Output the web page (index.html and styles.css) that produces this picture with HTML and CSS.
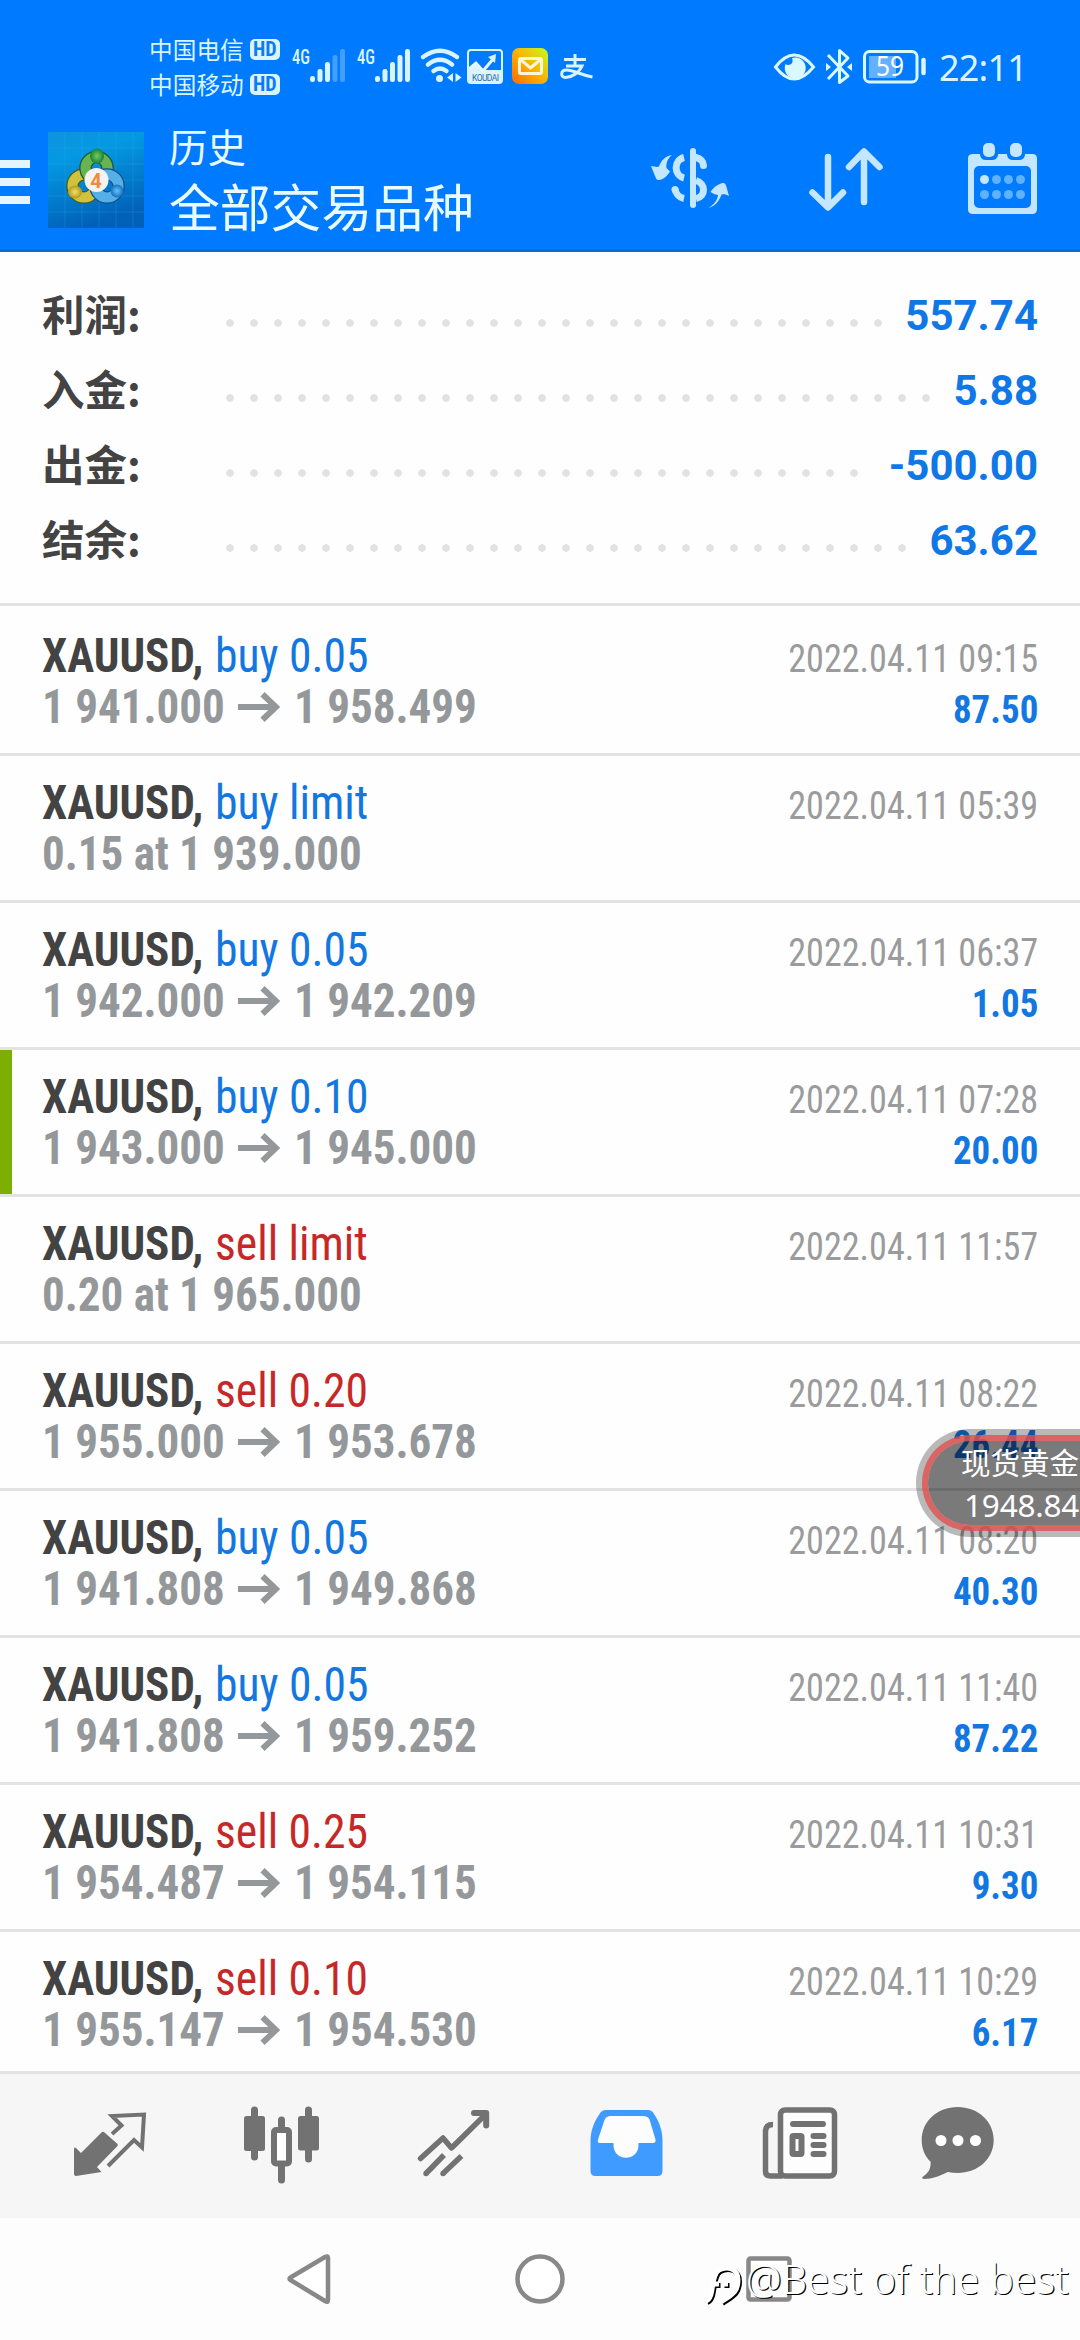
FILE: index.html
```html
<!DOCTYPE html>
<html lang="zh-CN">
<head>
<meta charset="utf-8">
<title>历史</title>
<link rel="stylesheet" href="styles.css">
</head>
<body>
<svg class="defs" width="0" height="0">
  <symbol id="arrow" viewBox="0 0 42 30"><path d="M0 15H38M24.500 2.200 38 15 24.500 27.800" fill="none" stroke="#95989a" stroke-width="6"/></symbol>
</svg>

<header class="top">
  <div class="status">
    <div class="carriers">
      <div class="carrier">中国电信<span class="hd">HD</span></div>
      <div class="carrier">中国移动<span class="hd">HD</span></div>
    </div>
    <svg class="status-left" viewBox="286 36 314 60" width="314" height="60" fill="#d9f4ff">
      <g class="gen"><text x="292" y="64" textLength="18" lengthAdjust="spacingAndGlyphs">4G</text><text x="357" y="64" textLength="18" lengthAdjust="spacingAndGlyphs">4G</text></g>
      <rect x="310" y="76" width="5" height="6" rx="2.300"/><rect x="317.500" y="69" width="5" height="13" rx="2.300"/><rect x="325" y="62" width="5" height="20" rx="2.300"/>
      <g opacity=".3"><rect x="332.500" y="55" width="5" height="27" rx="2.300"/><rect x="340" y="49" width="5" height="33" rx="2.300"/></g>
      <rect x="375" y="76" width="5" height="6" rx="2.300"/><rect x="382.500" y="69" width="5" height="13" rx="2.300"/><rect x="390" y="62" width="5" height="20" rx="2.300"/><rect x="397.500" y="55" width="5" height="27" rx="2.300"/><rect x="405" y="49" width="5" height="33" rx="2.300"/>
      <g fill="none" stroke="#d9f4ff" stroke-width="4.500" stroke-linecap="round"><path d="M423 57Q440 44.500 457 57M428 64.500Q440 55 452 64.500M433.500 71Q440 66 446.500 71"/></g>
      <circle cx="439.500" cy="78.500" r="3.500"/><path d="M453 73v9l-6-4.500zM455.500 73v9l6-4.500z"/>
      <rect x="468" y="50" width="34" height="33" rx="3" fill="none" stroke="#d9f4ff" stroke-width="2"/>
      <path d="M468 71l8-8 6 7h20v13h-34z"/>
      <path d="M469 69l7-6 7 8 11-13" fill="none" stroke="#e6f8ff" stroke-width="3"/><path d="M496 54l-1 9-7-6z"/>
      <text class="koudai" x="472" y="80.500" textLength="27">KOUDAI</text>
      <defs><linearGradient id="mail" x1="0" y1="1" x2="1" y2="0"><stop stop-color="#ff6a00"/><stop offset=".45" stop-color="#ffaa00"/><stop offset="1" stop-color="#c3ff20"/></linearGradient></defs>
      <rect x="512" y="48" width="36" height="36" rx="7" fill="url(#mail)"/><rect x="519.500" y="58.500" width="22" height="15" rx="1.500" fill="none" stroke="#fff6d8" stroke-width="3"/><path d="M521 60l9.500 8 9.500-8" fill="none" stroke="#fff6d8" stroke-width="3"/>
      <path d="M564 59.500h22M575 54v12M566 66h16c-3 7-11 11.500-16.500 11.500-5.500 0-5-7.500 1-7.500 7 0 13 4.500 26 7" fill="none" stroke="#d9f4ff" stroke-width="3"/>
    </svg>
    <svg class="status-right" viewBox="770 44 156 44" width="156" height="44" fill="none" stroke="#d9f8ff" stroke-width="3">
      <path d="M775.500 67Q794 43 813.500 67Q794 91 775.500 67Z"/><path d="M792 58a10.500 10.500 0 1 1-6.500 6c3 2.500 9 0 6.500-6z" fill="#d9f8ff" stroke="none"/>
      <path d="M828 55l20 21-8.500 6.500v-32L848 58l-20 21" stroke-linejoin="round"/><path d="M826 63v8l5-4zM852 63v8l-5-4z" fill="#d9f8ff" stroke="none"/>
      <rect x="864.500" y="51.500" width="52.500" height="30.500" rx="5"/><rect x="869" y="56" width="27" height="22" fill="#63b0ff" stroke="none"/><path d="M923.500 60v13" stroke-width="4.500" stroke-linecap="round"/>
      <text class="batt" x="876" y="76" textLength="28" lengthAdjust="spacingAndGlyphs" fill="#fff" stroke="none">59</text>
    </svg>
    <div class="clock">22:11</div>
  </div>
  <div class="bar">
    <svg class="bar-left" viewBox="0 126 150 108" width="150" height="108">
      <defs>
        <linearGradient id="app" x1="0" y1="0" x2=".3" y2="1"><stop stop-color="#0f92e0"/><stop offset=".3" stop-color="#0499e2"/><stop offset="1" stop-color="#0161b8"/></linearGradient>
        <radialGradient id="gr"><stop stop-color="#6fce5c"/><stop offset="1" stop-color="#1b8136"/></radialGradient>
        <radialGradient id="ye"><stop stop-color="#efe16d"/><stop offset="1" stop-color="#b39a18"/></radialGradient>
        <radialGradient id="bl"><stop stop-color="#65c3f5"/><stop offset="1" stop-color="#1670c0"/></radialGradient>
      </defs>
      <path d="M0 160h30v8H0zM0 178h30v8H0zM0 196h30v8H0z" fill="#e4f5ff"/>
      <rect x="48" y="132" width="96" height="96" fill="url(#app)"/>
      <path d="M48 148h96M48 164h96M48 180h96M48 196h96M48 212h96M65 132v96M82 132v96M99 132v96M116 132v96M133 132v96" stroke="#38b5f0" stroke-opacity=".25"/>
      <g fill="none" stroke-width="10">
        <circle cx="84" cy="186" r="11.500" stroke="#4c5a1e" stroke-width="12.500"/><circle cx="84" cy="186" r="11.500" stroke="#cfc23c"/>
        <circle cx="96.500" cy="168" r="11" stroke="#175c35" stroke-width="12.500"/><circle cx="96.500" cy="168" r="11" stroke="#68b352"/>
        <circle cx="107" cy="186" r="11.500" stroke="#124e87" stroke-width="12.500"/><circle cx="107" cy="186" r="11.500" stroke="#55b0e8"/>
      </g>
      <ellipse cx="97" cy="156" rx="7" ry="7.500" fill="url(#gr)"/><ellipse cx="75" cy="192" rx="7" ry="6.500" fill="url(#ye)"/><ellipse cx="117" cy="191" rx="6.500" ry="6.500" fill="url(#bl)"/>
      <circle cx="96.500" cy="180" r="12" fill="#f5f3f0"/><text class="four" x="96" y="187.500" text-anchor="middle">4</text>
    </svg>
    <div class="titles">
      <div class="title">历史</div>
      <div class="subtitle">全部交易品种</div>
    </div>
    <svg class="bar-icons" viewBox="640 136 404 84" width="404" height="84" fill="#c5e6ff">
      <g fill="none" stroke="#c5e6ff" stroke-width="7">
        <path d="M693 151v54" stroke-width="6" stroke-linecap="round"/>
        <path d="M684 157.500c-10.500 2.500-10.500 18 0 20.500M684 198.500c-5-1-8.500-5-9-10" /><path d="M696 157.500c4.500 1 7.500 4 7.500 8" stroke-linecap="round"/><path d="M696 180.500c10 3 10 16 0 18"/>
      </g>
      <circle cx="675" cy="189.500" r="3.500"/>
      <path d="M672 155c-5 4-6 9-5.500 13l3.500 3.500c-3 5-7 8-11 8.500-3 0-3-2-4-4l-4-10c3 .5 6 1.500 8 .5 2-6 7-11 13-11.500zM708.500 208c6-4 9-8 9.500-13-3-.5-5-1.500-7.500-3 3-5 8-8 12-9 3 0 3 1 4 4l2.500 9c-2.500-1.500-5-2-7.500-1.500-2 6-6 11.500-13 13.500z"/>
      <g fill="none" stroke="#c5e6ff" stroke-width="6.500" stroke-linecap="round" stroke-linejoin="round"><path d="M828 157v50M812.500 192.500 828 207.500l15-15M864 202v-50M849 167l15-15.500 15.500 15.500"/></g>
      <path fill-rule="evenodd" d="M972 154h8v1a6 6 0 0 0 6 5h6a6 6 0 0 0 6-5v-1h9v1a6 6 0 0 0 6 5h6a6 6 0 0 0 6-5v-1h8a4.500 4.500 0 0 1 4 4.500v50.500a5 5 0 0 1-4 5h-61a5 5 0 0 1-4-5v-50.500a4.500 4.500 0 0 1 4-4.500zM979 166a5 5 0 0 0-5 5v32a5 5 0 0 0 5 5h47a5 5 0 0 0 5-5v-32a5 5 0 0 0-5-5z"/>
      <rect x="983" y="143" width="12" height="14" rx="5"/><rect x="1010" y="143" width="12" height="14" rx="5"/>
      <circle cx="984.500" cy="179.500" r="4.500"/>
      <g fill="#5fb2ff"><circle cx="996.500" cy="179.500" r="4.500"/><circle cx="1008.500" cy="179.500" r="4.500"/><circle cx="1020.500" cy="179.500" r="4.500"/><circle cx="984.500" cy="194.500" r="4.500"/><circle cx="996.500" cy="194.500" r="4.500"/><circle cx="1008.500" cy="194.500" r="4.500"/><circle cx="1020.500" cy="194.500" r="4.500"/></g>
    </svg>
  </div>
</header>

<main>
  <section class="summary">
    <div class="sum"><span class="label">利润:</span><span class="dots"></span><span class="value">557.74</span></div>
    <div class="sum"><span class="label">入金:</span><span class="dots"></span><span class="value">5.88</span></div>
    <div class="sum"><span class="label">出金:</span><span class="dots"></span><span class="value">-500.00</span></div>
    <div class="sum"><span class="label">结余:</span><span class="dots"></span><span class="value">63.62</span></div>
  </section>

  <section class="deals">
    <div class="deal">
      <div class="info"><div class="line"><b class="sym">XAUUSD,</b><span class="buy">buy 0.05</span></div><div class="line price"><span>1 941.000</span><svg><use href="#arrow"/></svg><span>1 958.499</span></div></div>
      <div class="meta"><span class="date">2022.04.11 09:15</span><b class="profit">87.50</b></div>
    </div>
    <div class="deal">
      <div class="info"><div class="line"><b class="sym">XAUUSD,</b><span class="buy">buy limit</span></div><div class="line price"><span>0.15 at 1 939.000</span></div></div>
      <div class="meta"><span class="date">2022.04.11 05:39</span></div>
    </div>
    <div class="deal">
      <div class="info"><div class="line"><b class="sym">XAUUSD,</b><span class="buy">buy 0.05</span></div><div class="line price"><span>1 942.000</span><svg><use href="#arrow"/></svg><span>1 942.209</span></div></div>
      <div class="meta"><span class="date">2022.04.11 06:37</span><b class="profit">1.05</b></div>
    </div>
    <div class="deal marked">
      <div class="info"><div class="line"><b class="sym">XAUUSD,</b><span class="buy">buy 0.10</span></div><div class="line price"><span>1 943.000</span><svg><use href="#arrow"/></svg><span>1 945.000</span></div></div>
      <div class="meta"><span class="date">2022.04.11 07:28</span><b class="profit">20.00</b></div>
    </div>
    <div class="deal">
      <div class="info"><div class="line"><b class="sym">XAUUSD,</b><span class="sell">sell limit</span></div><div class="line price"><span>0.20 at 1 965.000</span></div></div>
      <div class="meta"><span class="date">2022.04.11 11:57</span></div>
    </div>
    <div class="deal">
      <div class="info"><div class="line"><b class="sym">XAUUSD,</b><span class="sell">sell 0.20</span></div><div class="line price"><span>1 955.000</span><svg><use href="#arrow"/></svg><span>1 953.678</span></div></div>
      <div class="meta"><span class="date">2022.04.11 08:22</span><b class="profit">26.44</b></div>
    </div>
    <div class="deal">
      <div class="info"><div class="line"><b class="sym">XAUUSD,</b><span class="buy">buy 0.05</span></div><div class="line price"><span>1 941.808</span><svg><use href="#arrow"/></svg><span>1 949.868</span></div></div>
      <div class="meta"><span class="date">2022.04.11 08:20</span><b class="profit">40.30</b></div>
    </div>
    <div class="deal">
      <div class="info"><div class="line"><b class="sym">XAUUSD,</b><span class="buy">buy 0.05</span></div><div class="line price"><span>1 941.808</span><svg><use href="#arrow"/></svg><span>1 959.252</span></div></div>
      <div class="meta"><span class="date">2022.04.11 11:40</span><b class="profit">87.22</b></div>
    </div>
    <div class="deal">
      <div class="info"><div class="line"><b class="sym">XAUUSD,</b><span class="sell">sell 0.25</span></div><div class="line price"><span>1 954.487</span><svg><use href="#arrow"/></svg><span>1 954.115</span></div></div>
      <div class="meta"><span class="date">2022.04.11 10:31</span><b class="profit">9.30</b></div>
    </div>
    <div class="deal">
      <div class="info"><div class="line"><b class="sym">XAUUSD,</b><span class="sell">sell 0.10</span></div><div class="line price"><span>1 955.147</span><svg><use href="#arrow"/></svg><span>1 954.530</span></div></div>
      <div class="meta"><span class="date">2022.04.11 10:29</span><b class="profit">6.17</b></div>
    </div>
  </section>
</main>

<nav class="tabs">
  <svg viewBox="0 2074 195 144">
    <path d="M74 2149.500q0-3 2-1.500l5 5 20.500-20.500c1-1 2-1 3 0L117 2143.500c1 1 1 2 0 3L97 2167l4.500 5-25.500 4q-2 0-2-2z" fill="#727272"/>
    <path d="M112 2134l9.500-8.500-9.500-9.500 32-1.500-2 33-8-7.500-26 26" fill="none" stroke="#727272" stroke-width="4"/>
  </svg>
  <svg viewBox="195 2074 173 144">
    <path d="M254.500 2110v47M308.500 2110v49M281.500 2120v60" stroke="#727272" stroke-width="7" stroke-linecap="round"/>
    <rect x="244" y="2116" width="21" height="35" rx="2.500" fill="#727272"/><rect x="298" y="2116" width="21" height="34.500" rx="2.500" fill="#727272"/>
    <rect x="274" y="2130" width="15" height="33.500" rx="2" fill="#fff" stroke="#727272" stroke-width="6"/>
  </svg>
  <svg viewBox="368 2074 172 144">
    <g fill="none" stroke="#727272" stroke-width="5.500" stroke-linejoin="round"><path d="M420.500 2158.500 443 2138l8.500 10 34-33.500" stroke-linecap="round"/><path d="M474 2113h12.200v12.500" stroke-width="6" stroke-linecap="round"/><path d="M426 2173.500 444 2155M443 2173.500 461.500 2156"/></g>
    <circle cx="426" cy="2173.500" r="2.700" fill="#727272"/><circle cx="443" cy="2173.500" r="2.700" fill="#727272"/>
  </svg>
  <svg viewBox="540 2074 173 144">
    <path d="M606 2110h42q4 0 6 4c6 9 8.500 17 8.500 27v30q0 5-5 5h-62q-5 0-5-5v-30c0-10 3-18 9-27q2-4 6.500-4z" fill="#3f9bff"/>
    <path d="M611 2116h32q5 0 6.500 3.500l6 20q.5 3.500-2.500 3.500h-14.500v2c0 17-25 17-25 0v-2H600q-3 0-2-3.500l6.500-19.500q1.500-4 6.500-4z" fill="#fdfdfd"/>
  </svg>
  <svg viewBox="713 2074 167 144">
    <rect x="780.500" y="2110" width="54" height="66" rx="4.500" fill="#fdfdfd" stroke="#727272" stroke-width="5.500"/>
    <path d="M773 2124.500q-7.500 0-7.500 7v40q0 4.500 5 4.500h12" fill="none" stroke="#727272" stroke-width="5.500"/>
    <path d="M793 2124h30M813.500 2136h10M813.500 2145h10M813.500 2154h10" stroke="#727272" stroke-width="6" stroke-linecap="round"/>
    <rect x="792.500" y="2136" width="9" height="18" rx="1" fill="#fdfdfd" stroke="#727272" stroke-width="6"/>
  </svg>
  <svg viewBox="880 2074 200 144">
    <path d="M957.700 2107c20 0 36 14 36 33s-16 33-36 33q-5 0-10-1c-8 4-15 7-24 7q-3-1 0-3c6-4 7-9 7-14-6-6-9-13-9-22 0-19 16-33 36-33z" fill="#727272"/>
    <g fill="#fff"><circle cx="941" cy="2140.500" r="5.500"/><circle cx="958" cy="2140.500" r="5.500"/><circle cx="975.500" cy="2140.500" r="5.500"/></g>
  </svg>
</nav>

<footer class="sysnav">
  <svg viewBox="0 2218 1080 122" width="1080" height="122" fill="none" stroke="#888" stroke-width="4.500" stroke-linejoin="round">
    <path d="M290.500 2277.500 325 2257q3-1.500 3 1v42q0 3-3 1l-34.500-21q-2-1.300 0-2.500z" fill="#fff"/>
    <circle cx="540" cy="2279" r="22.500" fill="#fff"/>
    <rect x="748.500" y="2258.500" width="41" height="41" rx="2" fill="#fff"/>
  </svg>
  <div class="mark">
    <svg viewBox="700 2260 46 48" width="46" height="48" fill="none" stroke-width="5"><path d="M706 2301c9-3 4-26 13-31 8-4 19-2 19 10 0 14-9 16-17 22M709 2284h10M723 2284h5" stroke="#000" transform="translate(1.500 1.500)"/><path d="M706 2301c9-3 4-26 13-31 8-4 19-2 19 10 0 14-9 16-17 22M709 2284h10M723 2284h5" stroke="#fff"/></svg>
    <span>@Best of the best</span>
  </div>
</footer>

<aside class="bubble"><div class="bubble-in"><span class="gold">现货黄金</span><span class="quote">1948.84</span></div></aside>
</body>
</html>
```
FILE: styles.css
```css
* { box-sizing: border-box; }
body { margin: 0; width: 1080px; height: 2340px; position: relative; overflow: hidden; background: #fefefe; font-family: Roboto, "Noto Sans CJK SC", sans-serif; display: flex; flex-direction: column; }
svg { display: block; flex: none; }
.defs { position: absolute; }

.top { height: 252px; flex: none; background: #007aff; border-bottom: 3px solid #0d6cd0; }
.status { height: 126px; display: flex; align-items: flex-start; padding-top: 32px; color: #d9f4ff; }
.carriers { width: 137px; margin-left: 149px; }
.carrier { height: 35px; line-height: 35px; font-size: 23.700px; font-family: "Noto Sans CJK SC", sans-serif; display: flex; align-items: center; white-space: nowrap; }
.hd { margin-left: 6px; width: 30px; height: 21px; flex: none; border-radius: 5px; background: #d9f4ff; color: #0a7cf5; font: bold 20px/21px "Roboto Condensed", sans-serif; text-align: center; }
.status-left { margin-top: 4px; }
.gen { font: 500 21px "Roboto Condensed", sans-serif; }
.koudai { font: 8.500px Roboto, sans-serif; fill: #2d6fa8; }
.status-right { margin: 12px 13px 0 170px; }
.batt { font: 28px "Noto Sans", sans-serif; }
.clock { font: 36px/40px "Noto Sans", sans-serif; margin-top: 16px; white-space: nowrap; letter-spacing: -.8px; }

.bar { height: 123px; display: flex; }
.four { font: bold 20px Roboto, sans-serif; fill: #f08a3c; }
.titles { width: 490px; padding-left: 19px; color: #e9fbff; font-family: "Noto Sans CJK SC", sans-serif; }
.title { font-size: 38.500px; line-height: 38px; }
.subtitle { font-size: 50.800px; line-height: 60px; margin-top: 11px; }
.bar-icons { margin-top: 10px; }

.summary { height: 354px; padding: 26px 42px 0 42px; border-bottom: 3px solid #e3e3e3; }
.sum { height: 75px; display: flex; line-height: 75px; }
.label { width: 176px; font: bold 42.500px/69px "Noto Sans CJK SC", sans-serif; color: #434343; }
.dots { flex: 1; margin-right: 18px; background: radial-gradient(circle 4px at 12px 45px, #e2e2e2 3.500px, transparent 4px) 0 0 / 24px 75px repeat-x; }
.value { font-weight: bold; font-size: 42px; color: #0f78e6; }

.deal { height: 147px; border-bottom: 3px solid #e3e3e3; padding: 21px 42px 0; display: flex; justify-content: space-between; background: #fefefe; }
.deal:first-child { height: 150px; padding-top: 24px; }
.deal:last-child { height: 142px; }
.marked { background: linear-gradient(90deg, #7daf00 12px, #fefefe 12px) padding-box; }
.line { display: flex; height: 51px; font: 48px/51px "Roboto Condensed", sans-serif; white-space: nowrap; }
.line > b, .line > span { transform: scaleX(.938); transform-origin: 0 0; }
.sym { width: 173px; color: #434343; }
.line > .buy, .line > .sell { transform: scaleX(.95); }
.buy { color: #1277e0; }
.sell { color: #c62828; }
.price { font-weight: bold; color: #95989a; }
.price > span:first-child { width: 196px; }
.price svg { width: 42px; height: 30px; margin: 11px 14px 0 0; }
.meta { display: flex; flex-direction: column; align-items: flex-end; padding-top: 3px; font: 39.500px/51px "Roboto Condensed", sans-serif; }
.date { color: #9a9b9d; transform: scaleX(.915); transform-origin: 100% 0; }
.profit { color: #1277e0; transform: scaleX(.935); transform-origin: 100% 0; }

.tabs { height: 144px; flex: none; display: grid; grid-template-columns: 195px 173px 172px 173px 167px 200px; background: #f6f6f6; }
.sysnav { height: 122px; flex: none; background: #fdfdfd; }
.mark { position: absolute; left: 700px; top: 2255px; display: flex; align-items: flex-start; color: #fff; font: 300 40px/48px "Noto Sans", sans-serif; letter-spacing: .15px; text-shadow: 1.200px 1px 0 #000; white-space: nowrap; }
.mark svg { margin-top: 5px; }

.bubble { position: absolute; left: 916px; top: 1429px; width: 164px; height: 108px; border-radius: 54px 0 0 54px; background: rgba(0,0,0,.27); padding: 6px 0 6px 6px; }
.bubble-in { height: 96px; border-radius: 48px 0 0 48px; border: 6px solid rgba(225,80,80,.8); border-right: 0; background: rgba(0,0,0,.34); background-clip: padding-box; color: #fff; display: flex; flex-direction: column; white-space: nowrap; padding-left: 33px; }
.gold { font: 29.500px/40px "Noto Sans CJK SC", sans-serif; }
.quote { font: 31.500px/40px "Noto Sans", sans-serif; margin: 4px 0 0 3px; letter-spacing: -.2px; }
```
